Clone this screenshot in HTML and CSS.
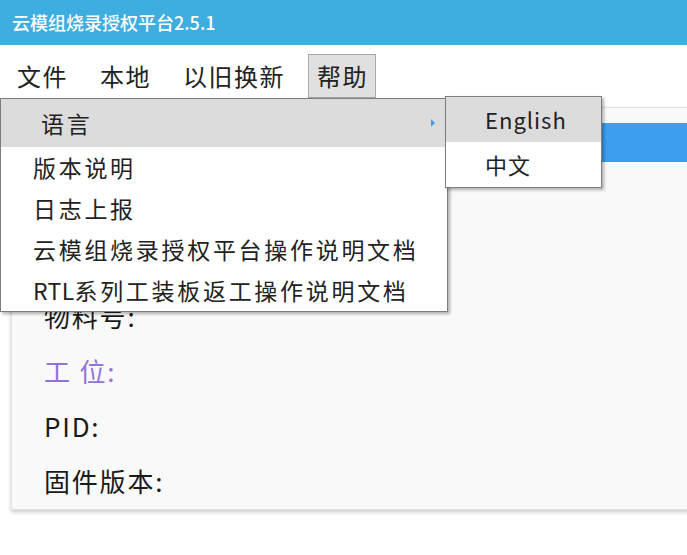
FILE: index.html
```html
<!DOCTYPE html>
<html lang="zh-CN">
<head>
<meta charset="utf-8">
<title>云模组烧录授权平台2.5.1</title>
<link rel="stylesheet" href="styles.css">
</head>
<body>
<div class="window">
  <header class="titlebar">云模组烧录授权平台2.5.1</header>
  <nav class="menubar">
    <span class="menu-item">文件</span>
    <span class="menu-item">本地</span>
    <span class="menu-item">以旧换新</span>
    <span class="menu-item open">帮助</span>
  </nav>
  <main class="content">
    <section class="card">
      <div class="card-bar"></div>
      <div class="fields">
        <div class="field">物料号:</div>
        <div class="field purple">工 位:</div>
        <div class="field">PID:</div>
        <div class="field">固件版本:</div>
      </div>
    </section>
  </main>

  <div class="dropdown">
    <div class="dd-item dd-sub hover">语言<span class="arrow"></span></div>
    <div class="dd-item">版本说明</div>
    <div class="dd-item">日志上报</div>
    <div class="dd-item">云模组烧录授权平台操作说明文档</div>
    <div class="dd-item"><span class="latin">RTL</span>系列工装板返工操作说明文档</div>
  </div>
  <div class="submenu">
    <div class="sub-item hover">English</div>
    <div class="sub-item">中文</div>
  </div>
</div>
</body>
</html>
```

FILE: styles.css
```css
html, body {
  margin: 0;
  padding: 0;
  background: #ffffff;
}
body {
  font-family: "Noto Sans CJK SC", "Noto Sans", sans-serif;
  color: #1e1e1e;
  width: 687px;
  height: 555px;
  overflow: hidden;
}
.window {
  position: relative;
  width: 687px;
  height: 555px;
  overflow: hidden;
}
.titlebar {
  height: 45px;
  background: #3eade0;
  color: #ffffff;
  font-size: 18px;
  line-height: 45px;
  padding-left: 12px;
  font-weight: 500;
}
.menubar {
  height: 53px;
  display: flex;
  align-items: flex-end;
  gap: 15px;
  padding-left: 8px;
}
.menu-item {
  font-size: 24px;
  letter-spacing: 1.5px;
  height: 44px;
  line-height: 42px;
  padding: 0 7px 0 8px;
  box-sizing: border-box;
  border: 1px solid transparent;
  color: #222;
}
.menu-item.open {
  background: #e0e0e0;
  border-color: #a8a8a8;
}
.content {
  padding: 9px 0 0 11px;
}
.card {
  width: 700px;
  height: 403px;
  box-sizing: border-box;
  background: #f9f9f9;
  border: 1px solid #e4e4e4;
  box-shadow: 0 2px 4px rgba(0,0,0,0.22);
  padding-top: 15px;
}
.card-bar {
  height: 39px;
  background: #3d9ef0;
}
.fields {
  padding: 126px 0 0 32px;
}
.field {
  font-size: 26px;
  height: 55px;
  line-height: 55px;
  letter-spacing: 1.8px;
  color: #1a1a1a;
}
.field.purple {
  color: #9373d8;
}
.dropdown {
  position: absolute;
  left: 0;
  top: 98px;
  width: 448px;
  box-sizing: border-box;
  background: #ffffff;
  border: 1px solid #7e7e7e;
  box-shadow: 2px 2px 3px rgba(0,0,0,0.3);
}
.dd-item {
  position: relative;
  height: 41px;
  line-height: 41px;
  padding-left: 32px;
  font-size: 23px;
  letter-spacing: 2.7px;
  color: #222;
  white-space: nowrap;
}
.latin {
  letter-spacing: 0.3px;
}
.dd-item.dd-sub {
  height: 48px;
  line-height: 48px;
  padding-left: 40px;
}
.hover {
  background: #dcdcdc;
}
.arrow {
  position: absolute;
  left: 430px;
  top: 20px;
  width: 0;
  height: 0;
  border-top: 4px solid transparent;
  border-bottom: 4px solid transparent;
  border-left: 4px solid #3d9ef0;
}
.submenu {
  position: absolute;
  left: 445px;
  top: 96px;
  width: 157px;
  box-sizing: border-box;
  background: #ffffff;
  border: 1px solid #7e7e7e;
  box-shadow: 2px 2px 3px rgba(0,0,0,0.3);
}
.sub-item {
  height: 45px;
  line-height: 45px;
  padding-left: 39px;
  font-size: 22px;
  letter-spacing: 1px;
  color: #222;
}
```
